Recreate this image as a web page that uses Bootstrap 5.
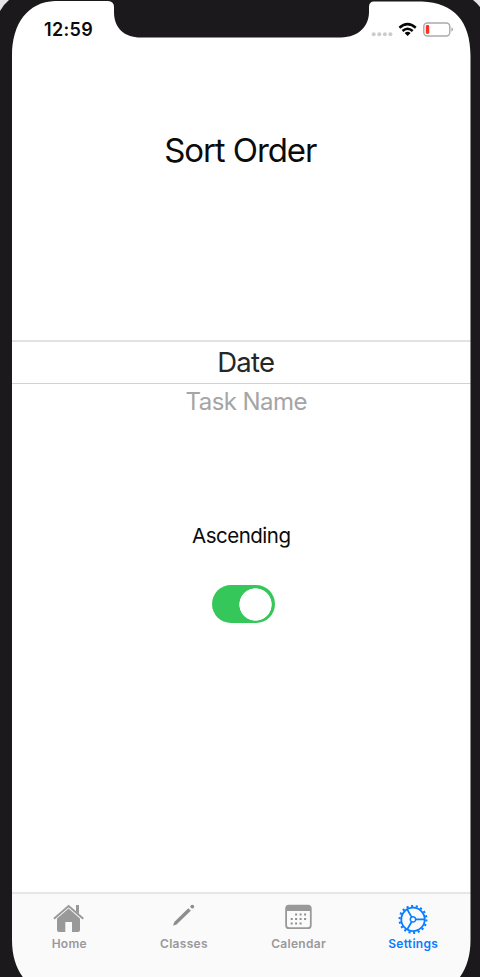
<!DOCTYPE html>
<html lang="en">
<head>
<meta charset="utf-8">
<meta name="viewport" content="width=device-width, initial-scale=1">
<title>Sort Order</title>
<link href="https://cdn.jsdelivr.net/npm/bootstrap@5.3.0/dist/css/bootstrap.min.css" rel="stylesheet">
<style>
html,body{height:977px;overflow:hidden}
body{font-family:Inter,"Liberation Sans",sans-serif;background:#1b191b;color:#0b0b0b}
.phone{height:977px;padding:1px 9.5px 0 12px}
.bezel{left:0;top:0;pointer-events:none;z-index:3}
.status{height:58px;padding:0 17px 0 32px}
.clock{font-size:18px;font-weight:600;line-height:58px;letter-spacing:.35px}
.heading{font-size:33px;line-height:40px;letter-spacing:-1.1px;margin:71px 0 0;padding-right:2px;font-weight:400}
.picker{margin-top:170px}
.chosen{height:44px;border-top:2px solid #e2e2e2;border-bottom:1px solid #d2d2d2;font-size:27.5px;line-height:41px;letter-spacing:-.7px;padding-left:9px;color:#262626}
.other{font-size:24px;line-height:36px;letter-spacing:-.55px;padding-left:10px;color:#a5a5a5}
.order-label{font-size:20.5px;line-height:28px;letter-spacing:-.5px;margin-top:102px}
.toggle.form-check-input{width:63px;height:38px;margin:35px 0 0 4px;border:0;border-radius:19px;background-color:#35c759;box-shadow:none;background-size:33px 33px;background-position:27px 2.5px;background-repeat:no-repeat;background-image:radial-gradient(circle closest-side,#fff 96%,transparent 100%)}
.tabs{height:85px;border-top:2px solid #e6e6e6;background:#fafafa}
.tab{width:114.7px;color:#999;font-size:12px;font-weight:600;letter-spacing:.3px;line-height:16px;padding-top:9px}
.tab svg{display:block;margin-bottom:1px}
.tab.on{color:#0a7cff}
</style>
<script src="https://cdn.jsdelivr.net/npm/bootstrap@5.3.0/dist/js/bootstrap.bundle.min.js"></script>
</head>
<body>
<div class="phone position-relative">
  <svg class="bezel position-absolute" width="480" height="977" viewBox="0 0 480 977">
    <path fill="#1b191b" fill-rule="evenodd" d="M0 0H480V977H0ZM55 1C28 2 12 23 12 56V940C12 972 29 994 60 994H423C454 994 470.500 972 470.500 940V56C470.500 21 454 3 422 1.500H374Q369 1.500 369 7V12C369 26 359 37 341 37.500H141C124 37.500 114 28 114 12V7Q114 1.500 108 1Z"/>
    <path fill="#e4e4e5" d="M0 0H9Q4 4 0 11ZM473 0H480V7Q477 3 473 0Z"/>
  </svg>
  <main class="bg-white h-100 d-flex flex-column text-center">
    <div class="status d-flex justify-content-between align-items-center">
      <span class="clock">12:59</span>
      <svg width="84" height="20" viewBox="370 20 84 20">
        <g fill="#ccc"><circle cx="373.700" cy="34.200" r="2"/><circle cx="379.300" cy="34.200" r="2"/><circle cx="384.900" cy="34.200" r="2"/><circle cx="390.400" cy="34.200" r="2"/></g>
        <g fill="none" stroke="#080808" stroke-width="2.500"><path d="M399.400 27.700Q407.500 20.500 415.800 27.700M402.500 31Q407.500 26.500 412.700 31"/></g>
        <path d="M404.600 33Q407.600 30.500 410.600 33L407.600 36Z"/>
        <rect x="423.800" y="23" width="26" height="13" rx="3.500" fill="none" stroke="#aaa" stroke-width="1.400"/>
        <rect x="425.800" y="25" width="3.400" height="9" rx="1.400" fill="#ff3126"/>
        <path fill="#999" d="M451.500 27.300Q454.300 29.500 451.500 31.700Z"/>
      </svg>
    </div>
    <h1 class="heading">Sort Order</h1>
    <div class="picker">
      <div class="chosen">Date</div>
      <div class="other">Task Name</div>
    </div>
    <label class="order-label" for="asc">Ascending</label>
    <div><input class="form-check-input toggle" id="asc" type="checkbox" role="switch" checked></div>
    <nav class="tabs d-flex mt-auto">
      <div class="tab d-flex flex-column align-items-center">
        <svg width="32" height="32" viewBox="53 903 32 32"><path fill="none" stroke="#999" stroke-width="2" d="M54 918.700L68.600 906L83.300 918.700"/><path fill="#999" d="M76 905H79V914L76 911.500ZM57 918.500L68.600 908.500L80 918.500V930Q80 932 78 932H72V922H65.300V932H59Q57 932 57 930Z"/></svg>Home
      </div>
      <div class="tab d-flex flex-column align-items-center">
        <svg width="32" height="32" viewBox="168 903 32 32"><path fill="#8d8d8d" d="M173 925.700L174.300 922L188.300 908.300L190.800 910.800L176.500 924.500Z"/><circle cx="192.300" cy="906.600" r="1.900" fill="#8d8d8d"/></svg>Classes
      </div>
      <div class="tab d-flex flex-column align-items-center">
        <svg width="32" height="32" viewBox="282.900 903 32 32"><rect x="286" y="905.600" width="24.700" height="22.600" rx="3" fill="none" stroke="#999" stroke-width="1.800"/><path fill="#999" d="M286 911V908Q286 905.600 289 905.600H308Q310.700 905.600 310.700 908V911Z"/><g fill="#8f8f8f"><path d="M295 913.500h2v2h-2zM299.500 913.500h2v2h-2zM304 913.500h2v2h-2zM290.600 918h2v2h-2zM295 918h2v2h-2zM299.500 918h2v2h-2zM304 918h2v2h-2zM290.600 922.400h2v2h-2zM295 922.400h2v2h-2zM299.500 922.400h2v2h-2z"/></g></svg>Calendar
      </div>
      <div class="tab on d-flex flex-column align-items-center">
        <svg width="32" height="32" viewBox="-16 -16.400 32 32"><g fill="none" stroke="#0a7cff"><circle r="11.700" stroke-width="1.800"/><circle r="13.400" stroke-width="2.200" stroke-dasharray="2.100 2.578"/><circle r="2.700" stroke-width="1.500"/><path stroke-width="1.700" d="M2.700 0H11.700M-1.350 -2.340L-5.850 -10.130M-1.350 2.340L-5.850 10.130"/></g></svg>Settings
      </div>
    </nav>
  </main>
</div>
</body>
</html>
